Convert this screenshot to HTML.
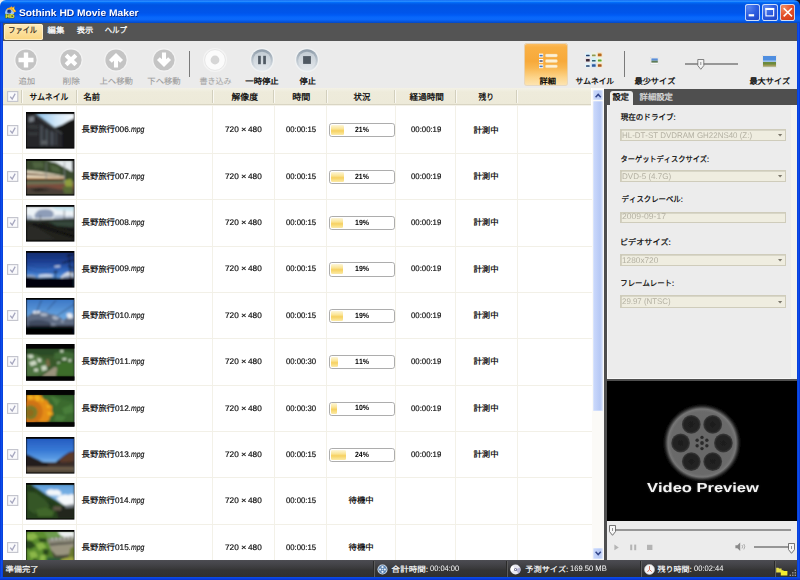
<!DOCTYPE html>
<html lang="ja"><head><meta charset="utf-8"><title>Sothink HD Movie Maker</title><style>
html,body{margin:0;padding:0;background:#fff}
body{width:800px;height:580px;position:relative;overflow:hidden;font-family:"Liberation Sans",sans-serif;font-kerning:none;text-rendering:geometricPrecision}
#root{position:absolute;left:0;top:0;width:800px;height:580px;overflow:hidden;background:#ebebeb}
#root div{position:absolute}
.j,.a{position:absolute;overflow:visible;display:block}
.j text{font-family:"Liberation Sans","Noto Sans CJK JP",sans-serif}
.s{-webkit-text-stroke:.17px currentColor}
.t{position:absolute;white-space:pre;line-height:1;transform-origin:0 50%;display:block}
#title{left:0;top:0;width:800px;height:23.4px;border-radius:6px 6px 0 0;
background:linear-gradient(to bottom,#0058ee 0%,#3593ff 4%,#288eff 6%,#127dff 8%,#036ffc 10%,#0262ee 14%,#0057e5 20%,#0054e3 24%,#0055eb 56%,#005bf5 66%,#0867fa 74%,#0a68fb 84%,#0559e4 92%,#0647c2 100%)}
.wb{width:15.4px;height:16.4px;border-radius:2.8px;box-shadow:inset 0 0 0 .9px #cfe0fb;background:radial-gradient(circle at 25% 20%,#5a86f0 0%,#2c5ce0 45%,#1c40c0 100%)}
.wc{background:radial-gradient(circle at 25% 20%,#f08a60 0%,#e4502a 45%,#c83412 100%)}
</style></head><body><div id="root">
<div style="left:792.00px;top:0.00px;width:8.00px;height:8.00px;background:#14142c"></div>
<div id="title"></div>
<svg class="a" style="left:4px;top:5.5px" width="13" height="13" viewBox="0 0 13 13">
<circle cx="5.6" cy="6.6" r="4.5" fill="#9cc6f0"/><circle cx="5.2" cy="5.4" r="2.1" fill="#2648a8"/><circle cx="4.9" cy="5.1" r="1" fill="#0e2a78"/>
<path d="M1.6 4.6 Q3 1.6 6.4 1.2 L7.6 0.2 L8.4 1.6 L10.6 0.3 L10.2 2.8 L12.2 5.4 L10 6.6 Q8.6 3.4 5.6 3.2 Q3.4 3.2 1.6 4.6 Z" fill="#f6a623"/>
<path d="M2.6 3.6 Q4.4 1.8 7 1.9 Q9.4 2.6 10.4 5.6 L11.6 5.3 L10 3.2 L10 1.6 L8.4 2.4 Q5 1.4 2.6 3.6 Z" fill="#ffe23c"/>
<rect x="0.9" y="7.9" width="9.6" height="4.6" rx=".8" fill="#4a5a18" opacity=".8"/>
<text x="1.2" y="12.1" font-family="Liberation Sans" font-weight="bold" font-size="5.4" fill="#f2f03a" textLength="9" lengthAdjust="spacingAndGlyphs">HD</text></svg>
<span class="t" style="left:19.30px;top:9.00px;font-size:9.60px;color:#fff;font-weight:bold;transform:scaleX(1.0681);text-shadow:0.7px 0.7px 0.5px #0a2a8a;">Sothink HD Movie Maker</span>
<div class="wb" style="left:744.8px;top:4.3px"><svg width="15.4" height="16.4" viewBox="0 -0.6 15.2 16.4" preserveAspectRatio="none"><rect x="3.6" y="9.6" width="5.4" height="2.2" fill="#fff"/></svg></div>
<div class="wb" style="left:762.2px;top:4.3px"><svg width="15.4" height="16.4" viewBox="0 -0.6 15.2 16.4" preserveAspectRatio="none"><rect x="3.9" y="3.9" width="7.6" height="7.4" fill="none" stroke="#fff" stroke-width="1.1"/><rect x="3.4" y="3.4" width="8.6" height="2" fill="#fff"/></svg></div>
<div class="wb wc" style="left:779.7px;top:4.3px"><svg width="15.4" height="16.4" viewBox="0 -0.6 15.2 16.4" preserveAspectRatio="none"><path d="M4.2 4.2 L11.2 11.2 M11.2 4.2 L4.2 11.2" stroke="#fff" stroke-width="1.6" stroke-linecap="square"/></svg></div>
<div style="left:3.00px;top:23.20px;width:794.00px;height:18.00px;background:#545454"></div>
<div style="left:3.60px;top:24.20px;width:39.40px;height:15.40px;background:linear-gradient(#fdebbd,#fbd57e);border-radius:2.5px;box-shadow:inset 0 0 0 0.8px #fff3d2"></div>
<svg class="j" style="left:6.60px;top:22.00px" width="31.40" height="16.60"><title>ファイル</title><text x="1.36" y="11.45" font-size="8.3" fill="#2a2418" stroke="#2a2418" stroke-width=".2" textLength="28.7" lengthAdjust="spacingAndGlyphs">ファイル</text></svg>
<svg class="j" style="left:46.10px;top:22.20px" width="20.00" height="16.00"><title>編集</title><text x="1.64" y="11.04" font-size="8" fill="#fff" stroke="#fff" stroke-width=".25" textLength="16.7" lengthAdjust="spacingAndGlyphs">編集</text></svg>
<svg class="j" style="left:74.60px;top:22.20px" width="19.80" height="16.00"><title>表示</title><text x="1.72" y="11.04" font-size="8" fill="#fff" stroke="#fff" stroke-width=".25" textLength="16.4" lengthAdjust="spacingAndGlyphs">表示</text></svg>
<svg class="j" style="left:103.40px;top:22.00px" width="25.60" height="16.60"><title>ヘルプ</title><text x="1.64" y="11.45" font-size="8.3" fill="#fff" stroke="#fff" stroke-width=".23" textLength="22.3" lengthAdjust="spacingAndGlyphs">ヘルプ</text></svg>
<div style="left:3.00px;top:41.20px;width:794.00px;height:47.00px;background:#ebebeb"></div>
<svg class="a" style="left:13.30px;top:47px" width="26" height="26" viewBox="-13 -13 26 26"><circle r="11.8" fill="#f3f3f3"/><circle r="10.6" fill="#c4c4c4"/><path d="M-7.5 0 H7.5 M0 -7.5 V7.5" stroke="#fff" stroke-width="4.4"/></svg>
<svg class="a" style="left:57.50px;top:47px" width="26" height="26" viewBox="-13 -13 26 26"><circle r="11.8" fill="#f3f3f3"/><circle r="10.6" fill="#c4c4c4"/><path d="M-4.9 -4.7 L4.9 4.7 M4.9 -4.7 L-4.9 4.7" stroke="#fff" stroke-width="4.1"/></svg>
<svg class="a" style="left:102.80px;top:47px" width="26" height="26" viewBox="-13 -13 26 26"><circle r="11.8" fill="#f3f3f3"/><circle r="10.6" fill="#c4c4c4"/><path d="M0 7.4 V-2 M-5.6 1.4 L0 -4.2 L5.6 1.4" stroke="#fff" stroke-width="4.1" fill="none" stroke-linejoin="miter"/></svg>
<svg class="a" style="left:150.80px;top:47px" width="26" height="26" viewBox="-13 -13 26 26"><circle r="11.8" fill="#f3f3f3"/><circle r="10.6" fill="#c4c4c4"/><path d="M0 -7.4 V2 M-5.6 -1.4 L0 4.2 L5.6 -1.4" stroke="#fff" stroke-width="4.1" fill="none" stroke-linejoin="miter"/></svg>
<svg class="j" style="left:16.80px;top:72.70px" width="19.70" height="16.00"><title>追加</title><text x="1.52" y="11.04" font-size="8" fill="#9c9c9c" stroke="#9c9c9c" stroke-width=".1" textLength="16.7" lengthAdjust="spacingAndGlyphs">追加</text></svg>
<svg class="j" style="left:60.50px;top:72.70px" width="20.30" height="16.00"><title>削除</title><text x="1.40" y="11.04" font-size="8" fill="#9c9c9c" stroke="#9c9c9c" stroke-width=".1" textLength="17.5" lengthAdjust="spacingAndGlyphs">削除</text></svg>
<svg class="j" style="left:98.00px;top:72.70px" width="36.50" height="16.00"><title>上へ移動</title><text x="1.48" y="11.04" font-size="8" fill="#9c9c9c" stroke="#9c9c9c" stroke-width=".1" textLength="33.5" lengthAdjust="spacingAndGlyphs">上へ移動</text></svg>
<svg class="j" style="left:145.50px;top:72.70px" width="36.00" height="16.00"><title>下へ移動</title><text x="1.33" y="11.04" font-size="8" fill="#9c9c9c" stroke="#9c9c9c" stroke-width=".1" textLength="33.3" lengthAdjust="spacingAndGlyphs">下へ移動</text></svg>
<div style="left:188.80px;top:51.00px;width:1.20px;height:26.00px;background:#7a7a7a"></div>
<svg class="a" style="left:202px;top:46.8px" width="26" height="26" viewBox="-13 -13 26 26"><circle r="12" fill="#f4f4f4"/><circle r="10.4" fill="#fbfbfb" stroke="#e2e2e2" stroke-width=".8"/><circle r="4.4" fill="#d6d6d6"/></svg>
<svg class="j" style="left:198.00px;top:72.70px" width="35.20" height="16.00"><title>書き込み</title><text x="1.58" y="11.04" font-size="8" fill="#a6a6a6" stroke="#a6a6a6" stroke-width=".08" textLength="32" lengthAdjust="spacingAndGlyphs">書き込み</text></svg>
<svg class="a" style="left:248.80px;top:46.8px" width="26" height="26" viewBox="-13 -13 26 26"><defs><linearGradient id="egpause" x1="0" y1="0" x2="0" y2="1"><stop offset="0" stop-color="#8d9ba8"/><stop offset=".5" stop-color="#b9c3cc"/><stop offset="1" stop-color="#e6ebef"/></linearGradient><linearGradient id="ehpause" x1="0" y1="0" x2="0" y2="1"><stop offset="0" stop-color="#c3ccd4"/><stop offset="1" stop-color="#e2e7eb"/></linearGradient></defs><circle r="12.2" fill="#f0f2f3"/><circle r="10.8" fill="url(#egpause)"/><circle cy=".5" r="8.8" fill="url(#ehpause)"/><rect x="-3.9" y="-4.2" width="2.7" height="8.4" fill="#4f5963"/><rect x="1.2" y="-4.2" width="2.7" height="8.4" fill="#4f5963"/></svg>
<svg class="a" style="left:294.00px;top:46.8px" width="26" height="26" viewBox="-13 -13 26 26"><defs><linearGradient id="egstop" x1="0" y1="0" x2="0" y2="1"><stop offset="0" stop-color="#8d9ba8"/><stop offset=".5" stop-color="#b9c3cc"/><stop offset="1" stop-color="#e6ebef"/></linearGradient><linearGradient id="ehstop" x1="0" y1="0" x2="0" y2="1"><stop offset="0" stop-color="#c3ccd4"/><stop offset="1" stop-color="#e2e7eb"/></linearGradient></defs><circle r="12.2" fill="#f0f2f3"/><circle r="10.8" fill="url(#egstop)"/><circle cy=".5" r="8.8" fill="url(#ehstop)"/><rect x="-3.9" y="-3.9" width="7.8" height="7.8" fill="#4f5963"/></svg>
<svg class="j" style="left:243.50px;top:72.70px" width="36.00" height="16.00"><title>一時停止</title><text x="1.33" y="11.04" font-size="8" fill="#000" stroke="#000" stroke-width=".28" textLength="33.3" lengthAdjust="spacingAndGlyphs">一時停止</text></svg>
<svg class="j" style="left:297.50px;top:72.70px" width="19.50" height="16.00"><title>停止</title><text x="1.63" y="11.04" font-size="8" fill="#000" stroke="#000" stroke-width=".28" textLength="16.2" lengthAdjust="spacingAndGlyphs">停止</text></svg>
<div style="left:524.40px;top:42.60px;width:44.10px;height:43.60px;background:linear-gradient(#fbc068 0%,#f9b044 10%,#f7a93a 42%,#f9b750 58%,#fcd48a 80%,#fde6b6 100%);border-radius:3.5px;box-shadow:inset 0 0 0 0.9px rgba(226,214,196,.9)"></div>
<svg class="a" style="left:538px;top:52.6px" width="20" height="18" viewBox="0 0 20 18">
<g fill="#fdf1d6" stroke="#f3d6a0" stroke-width=".4"><rect x="7.4" y="1.1" width="12" height="2.9" rx="1.2"/><rect x="7.4" y="6.5" width="12" height="2.9" rx="1.2"/><rect x="7.4" y="11.9" width="12" height="2.9" rx="1.2"/></g>
<g><rect x="1" y=".6" width="4.2" height="3.8" fill="#fff"/><rect x="1.5" y="1.8" width="3.2" height="1.6" fill="#4a78b8"/>
<rect x="1" y="6" width="4.2" height="3.8" fill="#fff"/><rect x="1.5" y="7.2" width="3.2" height="1.6" fill="#5a5a70"/>
<rect x="1" y="11.4" width="4.2" height="3.8" fill="#fff"/><rect x="1.5" y="12.6" width="3.2" height="1.6" fill="#4a78b8"/></g></svg>
<svg class="j" style="left:537.50px;top:73.00px" width="19.50" height="16.00"><title>詳細</title><text x="1.55" y="11.04" font-size="8" fill="#000" stroke="#000" stroke-width=".28" textLength="16.4" lengthAdjust="spacingAndGlyphs">詳細</text></svg>
<svg class="a" style="left:585.4px;top:52.1px" width="17.7" height="15.3" viewBox="0 0 17.7 15.3"><rect x="0.20" y="0.30" width="5.30" height="4.50" fill="#dff2fa"/><rect x="1.00" y="2.72" width="3.70" height="1.48" rx=".5" fill="#1f3d6e"/><rect x="6.15" y="0.30" width="5.30" height="4.50" fill="#eef2e4"/><rect x="6.95" y="2.39" width="3.70" height="1.81" rx=".5" fill="#8f9a50"/><rect x="12.10" y="0.30" width="5.30" height="4.50" fill="#f6e2c0"/><rect x="12.90" y="1.56" width="3.70" height="2.64" rx=".5" fill="#b8681c"/><rect x="0.20" y="5.60" width="5.30" height="4.50" fill="#e8e0e4"/><rect x="1.00" y="7.03" width="3.70" height="2.47" rx=".5" fill="#3a2a38"/><rect x="6.15" y="5.60" width="5.30" height="4.50" fill="#d4f2f6"/><rect x="6.95" y="8.02" width="3.70" height="1.48" rx=".5" fill="#2c5a6c"/><rect x="12.10" y="5.60" width="5.30" height="4.50" fill="#eef6dc"/><rect x="12.90" y="7.52" width="3.70" height="1.98" rx=".5" fill="#5fa32c"/><rect x="0.20" y="10.90" width="5.30" height="4.50" fill="#e2f3fa"/><rect x="1.00" y="13.32" width="3.70" height="1.48" rx=".5" fill="#23426e"/><rect x="6.15" y="10.90" width="5.30" height="4.50" fill="#cfe0f4"/><rect x="6.95" y="12.33" width="3.70" height="2.47" rx=".5" fill="#2c5a9c"/><rect x="12.10" y="10.90" width="5.30" height="4.50" fill="#fae6c4"/><rect x="12.90" y="12.16" width="3.70" height="2.64" rx=".5" fill="#a8561c"/></svg>
<svg class="j" style="left:574.20px;top:73.00px" width="41.60" height="16.00"><title>サムネイル</title><text x="1.49" y="11.04" font-size="8" fill="#000" stroke="#000" stroke-width=".25" textLength="38.6" lengthAdjust="spacingAndGlyphs">サムネイル</text></svg>
<div style="left:624.00px;top:51.00px;width:1.20px;height:26.00px;background:#7a7a7a"></div>
<svg class="a" style="left:650.2px;top:57.1px" width="9.2" height="7.8" viewBox="0 0 9 8"><rect x=".2" y=".2" width="8.6" height="7.2" fill="#f8f8f8" stroke="#d0d0d0" stroke-width=".4"/><rect x="1.2" y="1.4" width="6.6" height="2.4" fill="#5b8ed6"/><rect x="1.2" y="3.8" width="6.6" height="2" fill="#5c7a58"/></svg>
<svg class="j" style="left:633.00px;top:72.70px" width="44.00" height="16.00"><title>最少サイズ</title><text x="1.48" y="11.04" font-size="8" fill="#000" stroke="#000" stroke-width=".25" textLength="41" lengthAdjust="spacingAndGlyphs">最少サイズ</text></svg>
<div style="left:685.00px;top:63.40px;width:53.00px;height:1.50px;background:#979797"></div>
<svg class="a" style="left:697.2px;top:59.2px" width="7.6" height="11" viewBox="0 0 7 11"><path d="M.5 .5 H6.5 V6.6 L3.5 10.3 L.5 6.6 Z" fill="#f4f4f4" stroke="#666" stroke-width=".8"/><path d="M3.5 3 V6" stroke="#888" stroke-width=".9"/></svg>
<svg class="a" style="left:761.6px;top:54.6px" width="15" height="13" viewBox="0 0 15 13"><rect x=".2" y=".2" width="14.6" height="12.2" fill="#f4f4f4" stroke="#d4d4d4" stroke-width=".4"/><rect x="1" y="1" width="13" height="6" fill="#4f8ee0"/><rect x="1" y="5.4" width="13" height="1.6" fill="#9cc0e8"/><rect x="1" y="7" width="13" height="4.4" fill="#6b8a3c"/><rect x="1" y="9.6" width="13" height="1.8" fill="#a09a58"/></svg>
<svg class="j" style="left:747.80px;top:72.70px" width="43.70" height="16.00"><title>最大サイズ</title><text x="1.48" y="11.04" font-size="8" fill="#000" stroke="#000" stroke-width=".25" textLength="40.7" lengthAdjust="spacingAndGlyphs">最大サイズ</text></svg>
<div style="left:3.00px;top:88.00px;width:601.00px;height:472.00px;background:#fff"></div>
<div style="left:3.00px;top:88.20px;width:588.30px;height:15.50px;background:linear-gradient(#f3f1e6 0%,#eeebdb 25%,#edead9 100%);border-bottom:1.2px solid #d9d5c3;box-shadow:0 1px 0.6px #f4f2ea"></div>
<div style="left:21.10px;top:90.40px;width:1.00px;height:12.40px;background:#d2cfbd;box-shadow:1px 0 0 #faf9f3"></div>
<div style="left:21.70px;top:105.40px;width:1.00px;height:454.60px;background:#f3f1e8"></div>
<div style="left:75.70px;top:90.40px;width:1.00px;height:12.40px;background:#d2cfbd;box-shadow:1px 0 0 #faf9f3"></div>
<div style="left:76.30px;top:105.40px;width:1.00px;height:454.60px;background:#f3f1e8"></div>
<div style="left:211.70px;top:90.40px;width:1.00px;height:12.40px;background:#d2cfbd;box-shadow:1px 0 0 #faf9f3"></div>
<div style="left:212.30px;top:105.40px;width:1.00px;height:454.60px;background:#f3f1e8"></div>
<div style="left:273.30px;top:90.40px;width:1.00px;height:12.40px;background:#d2cfbd;box-shadow:1px 0 0 #faf9f3"></div>
<div style="left:273.90px;top:105.40px;width:1.00px;height:454.60px;background:#f3f1e8"></div>
<div style="left:325.70px;top:90.40px;width:1.00px;height:12.40px;background:#d2cfbd;box-shadow:1px 0 0 #faf9f3"></div>
<div style="left:326.30px;top:105.40px;width:1.00px;height:454.60px;background:#f3f1e8"></div>
<div style="left:394.20px;top:90.40px;width:1.00px;height:12.40px;background:#d2cfbd;box-shadow:1px 0 0 #faf9f3"></div>
<div style="left:394.80px;top:105.40px;width:1.00px;height:454.60px;background:#f3f1e8"></div>
<div style="left:454.50px;top:90.40px;width:1.00px;height:12.40px;background:#d2cfbd;box-shadow:1px 0 0 #faf9f3"></div>
<div style="left:455.10px;top:105.40px;width:1.00px;height:454.60px;background:#f3f1e8"></div>
<div style="left:515.90px;top:90.40px;width:1.00px;height:12.40px;background:#d2cfbd;box-shadow:1px 0 0 #faf9f3"></div>
<div style="left:516.50px;top:105.40px;width:1.00px;height:454.60px;background:#f3f1e8"></div>
<svg class="a" style="left:6.60px;top:91.20px;opacity:1" width="11.4" height="11" viewBox="0 0 11.4 11"><rect x=".6" y=".6" width="10.2" height="9.8" fill="#fafafc" stroke="#c2c3cc" stroke-width="1.1"/><path d="M3.2 5.6 L5.2 8 L8.2 2.6" fill="none" stroke="#a6a7bf" stroke-width="1.3"/></svg>
<svg class="j" style="left:28.20px;top:87.80px" width="41.80" height="17.20"><title>サムネイル</title><text x="1.48" y="11.87" font-size="8.6" fill="#000" stroke="#000" stroke-width=".25" textLength="38.8" lengthAdjust="spacingAndGlyphs">サムネイル</text></svg>
<svg class="j" style="left:82.00px;top:87.80px" width="19.50" height="17.20"><title>名前</title><text x="1.49" y="11.87" font-size="8.6" fill="#000" stroke="#000" stroke-width=".25" textLength="16.5" lengthAdjust="spacingAndGlyphs">名前</text></svg>
<svg class="j" style="left:230.00px;top:87.80px" width="29.50" height="17.20"><title>解像度</title><text x="1.61" y="11.87" font-size="8.6" fill="#000" stroke="#000" stroke-width=".25" textLength="26.3" lengthAdjust="spacingAndGlyphs">解像度</text></svg>
<svg class="j" style="left:290.80px;top:87.80px" width="20.70" height="17.20"><title>時間</title><text x="1.26" y="11.87" font-size="8.6" fill="#000" stroke="#000" stroke-width=".25" textLength="18.2" lengthAdjust="spacingAndGlyphs">時間</text></svg>
<svg class="j" style="left:352.00px;top:87.80px" width="20.00" height="17.20"><title>状況</title><text x="1.59" y="11.87" font-size="8.6" fill="#000" stroke="#000" stroke-width=".25" textLength="16.8" lengthAdjust="spacingAndGlyphs">状況</text></svg>
<svg class="j" style="left:408.00px;top:87.80px" width="37.40" height="17.20"><title>経過時間</title><text x="1.57" y="11.87" font-size="8.6" fill="#000" stroke="#000" stroke-width=".25" textLength="34.3" lengthAdjust="spacingAndGlyphs">経過時間</text></svg>
<svg class="j" style="left:477.00px;top:87.80px" width="18.50" height="17.20"><title>残り</title><text x="1.53" y="11.87" font-size="8.6" fill="#000" stroke="#000" stroke-width=".25" textLength="15.4" lengthAdjust="spacingAndGlyphs">残り</text></svg>
<div style="left:3.00px;top:152.90px;width:588.60px;height:1.00px;background:#f2f0e7"></div>
<svg class="a" style="left:6.60px;top:124.50px;opacity:1" width="11.4" height="11" viewBox="0 0 11.4 11"><rect x=".6" y=".6" width="10.2" height="9.8" fill="#fafafc" stroke="#c2c3cc" stroke-width="1.1"/><path d="M3.2 5.6 L5.2 8 L8.2 2.6" fill="none" stroke="#a6a7bf" stroke-width="1.3"/></svg>
<svg class="a" style="left:25.90px;top:112.20px" width="48.4" height="36.6" viewBox="0 0 48 36" preserveAspectRatio="none"><defs><filter id="tb0" x="-5%" y="-5%" width="110%" height="110%"><feGaussianBlur stdDeviation=".8"/></filter><clipPath id="tc0"><rect x=".3" y="1.8" width="47.4" height="33.1"/></clipPath></defs><rect width="48" height="36" fill="#040404"/><g clip-path="url(#tc0)"><g filter="url(#tb0)"><rect width="48" height="36" fill="#1b1c1d"/><linearGradient id="s0" x1="0" x2="1" y1="0" y2="0"><stop offset="0" stop-color="#8fc4ee"/><stop offset=".55" stop-color="#d4e8f8"/><stop offset="1" stop-color="#f6fafd"/></linearGradient><path d="M9.5 1.5 L48 1.5 L48 6.5 L42 9 L36 12.5 L28.5 15.2 Z" fill="url(#s0)"/><path d="M0 3 L9.5 1.5 L28.5 15.2 L36 21 L36 35 L0 35 Z" fill="#25272a"/><path d="M3 5 L8 4 L8 9 L3 10 Z" fill="#7a8088"/><path d="M2 12 L12 13 L12 17 L2 16 Z M2 20 L12 20 L12 23 L2 23 Z" fill="#34373a"/><path d="M14 12 L17 14 L17 33 L14 33 Z M19 16 L22 17.5 L22 33 L19 33 Z M24 18 L27.5 20 L27.5 33 L24 33 Z" fill="#474d55"/><path d="M29 19 L31 20 L31 33 L29 33 Z" fill="#3d4248"/><path d="M8.5 2.5 L36 21.5" stroke="#555a5e" stroke-width="1.1"/><path d="M15 28 L21 28 L21 32 L15 32 Z" fill="#5a5e62"/><path d="M29 15.8 L36 12.5 L42 9 L48 6.5 L48 35 L37 35 L36 21 Z" fill="#161817"/></g></g></svg>
<svg class="j" style="left:79.90px;top:121.45px" width="36.50" height="16.50"><title>長野旅行</title><text x="1.54" y="11.39" font-size="8.25" fill="#000" stroke="#000" stroke-width=".2" textLength="33.4" lengthAdjust="spacingAndGlyphs">長野旅行</text></svg>
<span class="t s" style="left:114.58px;top:126.00px;font-size:8.20px;color:#0a0a0a;transform:scaleX(1.0076);">006</span>
<span class="t s" style="left:128.57px;top:126.00px;font-size:8.20px;color:#0a0a0a;transform:scaleX(0.8435);font-style:italic;">.mpg</span>
<span class="t s" style="left:225.48px;top:126.00px;font-size:8.00px;color:#0a0a0a;transform:scaleX(1.0297);">720</span>
<span class="t s" style="left:241.25px;top:126.00px;font-size:8.00px;color:#0a0a0a;transform:scaleX(1.1777);">×</span>
<span class="t s" style="left:247.81px;top:126.00px;font-size:8.00px;color:#0a0a0a;transform:scaleX(1.0271);">480</span>
<span class="t s" style="left:285.60px;top:126.00px;font-size:8.00px;color:#0a0a0a;transform:scaleX(0.9675);">00:00:15</span>
<div style="left:329.10px;top:123.30px;width:65.60px;height:14.10px;background:#fff;border:1.2px solid #adadad;border-radius:2.8px;box-sizing:border-box"><div style="left:0.9px;top:0.9px;width:12.89px;height:10.1px;background:linear-gradient(#fdf6d8 0%,#fbe596 38%,#f6d061 58%,#f8d974 70%,#fbeaa8 100%);border-radius:1.2px"></div></div>
<span class="t" style="left:354.96px;top:126.00px;font-size:7.60px;color:#000;font-weight:bold;transform:scaleX(0.9086);">21%</span>
<span class="t s" style="left:410.80px;top:126.00px;font-size:8.00px;color:#0a0a0a;transform:scaleX(0.9721);">00:00:19</span>
<svg class="j" style="left:472.20px;top:121.50px" width="28.10" height="16.20"><title>計測中</title><text x="1.49" y="11.18" font-size="8.1" fill="#000" stroke="#000" stroke-width=".2" textLength="25.1" lengthAdjust="spacingAndGlyphs">計測中</text></svg>
<div style="left:3.00px;top:199.27px;width:588.60px;height:1.00px;background:#f2f0e7"></div>
<svg class="a" style="left:6.60px;top:170.87px;opacity:1" width="11.4" height="11" viewBox="0 0 11.4 11"><rect x=".6" y=".6" width="10.2" height="9.8" fill="#fafafc" stroke="#c2c3cc" stroke-width="1.1"/><path d="M3.2 5.6 L5.2 8 L8.2 2.6" fill="none" stroke="#a6a7bf" stroke-width="1.3"/></svg>
<svg class="a" style="left:25.90px;top:158.57px" width="48.4" height="36.6" viewBox="0 0 48 36" preserveAspectRatio="none"><defs><filter id="tb1" x="-5%" y="-5%" width="110%" height="110%"><feGaussianBlur stdDeviation=".8"/></filter><clipPath id="tc1"><rect x=".3" y="1.8" width="47.4" height="33.1"/></clipPath></defs><rect width="48" height="36" fill="#040404"/><g clip-path="url(#tc1)"><g filter="url(#tb1)"><rect width="48" height="36" fill="#39482c"/><path d="M20 1.5 L46 1.5 L46 13 L41 10 L36 7.5 L30 4 Z" fill="#e6ecee"/><path d="M0 2 L20 2 L30 4 L36 7.5 L41 10 L48 14 L48 20 L0 13 Z" fill="#3a4c2e"/><path d="M6 3 L16 3 L18 8 L8 9 Z M24 6 L32 8 L34 13 L26 12 Z" fill="#4f6440"/><rect x="45.6" y="1.5" width="2.4" height="9.5" fill="#0a0a0a"/><path d="M0 11.3 L12 12.4 L26 14.6 L38 17 L38 19.4 L26 19.6 L0 20 Z" fill="#ebe1c8"/><path d="M0 13.6 L12 14.4 L26 16 L38 17.7 L38 18.3 L26 17.2 L12 16.2 L0 15.8 Z" fill="#6f5038"/><path d="M0 18.4 L26 18.8 L38 19 L38 19.6 L0 19.6 Z" fill="#c88a4a"/><path d="M0 20 L30 19.6 L40 19.6 L40 21 L0 22 Z" fill="#2a2620"/><rect x="0" y="21.6" width="48" height="4" fill="#6d7052"/><path d="M0 25.4 L48 24.2 L48 30 L0 31 Z" fill="#7c4e3e"/><path d="M0 28 L20 27.4 L34 30 L48 30 L48 35 L0 35 Z" fill="#4b4038"/><path d="M4 30 L14 29 L24 31 L10 32 Z" fill="#27231f"/><path d="M37 21 L45 19.5 L46.5 27 L40 28.5 Z" fill="#8f9e3c"/><path d="M36 27 L46 27 L46 34 L38 34 Z" fill="#596a36"/><path d="M20 3 V20 M38.2 3 V24" stroke="#7d8286" stroke-width=".8"/></g></g></svg>
<svg class="j" style="left:79.90px;top:167.82px" width="36.50" height="16.50"><title>長野旅行</title><text x="1.54" y="11.39" font-size="8.25" fill="#000" stroke="#000" stroke-width=".2" textLength="33.4" lengthAdjust="spacingAndGlyphs">長野旅行</text></svg>
<span class="t s" style="left:114.58px;top:173.00px;font-size:8.20px;color:#0a0a0a;transform:scaleX(1.0117);">007</span>
<span class="t s" style="left:128.57px;top:173.00px;font-size:8.20px;color:#0a0a0a;transform:scaleX(0.8435);font-style:italic;">.mpg</span>
<span class="t s" style="left:225.48px;top:173.00px;font-size:8.00px;color:#0a0a0a;transform:scaleX(1.0297);">720</span>
<span class="t s" style="left:241.25px;top:173.00px;font-size:8.00px;color:#0a0a0a;transform:scaleX(1.1777);">×</span>
<span class="t s" style="left:247.81px;top:173.00px;font-size:8.00px;color:#0a0a0a;transform:scaleX(1.0271);">480</span>
<span class="t s" style="left:285.60px;top:173.00px;font-size:8.00px;color:#0a0a0a;transform:scaleX(0.9675);">00:00:15</span>
<div style="left:329.10px;top:169.67px;width:65.60px;height:14.10px;background:#fff;border:1.2px solid #adadad;border-radius:2.8px;box-sizing:border-box"><div style="left:0.9px;top:0.9px;width:12.89px;height:10.1px;background:linear-gradient(#fdf6d8 0%,#fbe596 38%,#f6d061 58%,#f8d974 70%,#fbeaa8 100%);border-radius:1.2px"></div></div>
<span class="t" style="left:354.96px;top:173.00px;font-size:7.60px;color:#000;font-weight:bold;transform:scaleX(0.9086);">21%</span>
<span class="t s" style="left:410.80px;top:173.00px;font-size:8.00px;color:#0a0a0a;transform:scaleX(0.9721);">00:00:19</span>
<svg class="j" style="left:472.20px;top:167.87px" width="28.10" height="16.20"><title>計測中</title><text x="1.49" y="11.18" font-size="8.1" fill="#000" stroke="#000" stroke-width=".2" textLength="25.1" lengthAdjust="spacingAndGlyphs">計測中</text></svg>
<div style="left:3.00px;top:245.64px;width:588.60px;height:1.00px;background:#f2f0e7"></div>
<svg class="a" style="left:6.60px;top:217.24px;opacity:1" width="11.4" height="11" viewBox="0 0 11.4 11"><rect x=".6" y=".6" width="10.2" height="9.8" fill="#fafafc" stroke="#c2c3cc" stroke-width="1.1"/><path d="M3.2 5.6 L5.2 8 L8.2 2.6" fill="none" stroke="#a6a7bf" stroke-width="1.3"/></svg>
<svg class="a" style="left:25.90px;top:204.94px" width="48.4" height="36.6" viewBox="0 0 48 36" preserveAspectRatio="none"><defs><filter id="tb2" x="-5%" y="-5%" width="110%" height="110%"><feGaussianBlur stdDeviation=".8"/></filter><clipPath id="tc2"><rect x=".3" y="1.8" width="47.4" height="33.1"/></clipPath></defs><rect width="48" height="36" fill="#040404"/><g clip-path="url(#tc2)"><g filter="url(#tb2)"><rect width="48" height="36" fill="#1d1e1b"/><rect x="0" y="1.5" width="48" height="13" fill="#edf3f7"/><path d="M24 1.5 L48 1.5 L48 6 L30 5 Z" fill="#c9e6f1"/><path d="M11 6.5 Q13 4 19 4.2 Q25 3.8 27 7 Q28.5 10 26 12.6 L9 13 Q7 10 11 6.5 Z" fill="#8e9db8"/><path d="M0 10 Q4 9 7 11.6 L6 14 L0 14 Z M28 10.4 Q34 9 40 11 Q44 10 48 11.6 L48 14 L27 14 Z" fill="#b6c1d2"/><path d="M0 14 L12 14.6 L24 14 L36 13.6 L48 13 L48 17.5 L0 17.5 Z" fill="#283029"/><path d="M22 16.5 L48 16 L48 22 L30 20.6 Z" fill="#34463a"/><path d="M0 17 L20 17 L48 27 L48 35 L0 35 Z" fill="#20211e"/><path d="M8 18.5 L48 29.5 L48 32.5 L6 19.5 Z" fill="#0c0c0a"/><path d="M14 18 L48 24.5 L48 26 L13 18.8 Z" fill="#10100d"/><path d="M2 20 L10 22 L30 34 L0 35 Z" fill="#2b2c27"/><path d="M14.2 10 V18 M38 5 V14" stroke="#3b3f45" stroke-width=".6"/></g></g></svg>
<svg class="j" style="left:79.90px;top:214.19px" width="36.50" height="16.50"><title>長野旅行</title><text x="1.54" y="11.39" font-size="8.25" fill="#000" stroke="#000" stroke-width=".2" textLength="33.4" lengthAdjust="spacingAndGlyphs">長野旅行</text></svg>
<span class="t s" style="left:114.58px;top:219.00px;font-size:8.20px;color:#0a0a0a;transform:scaleX(1.0073);">008</span>
<span class="t s" style="left:128.57px;top:219.00px;font-size:8.20px;color:#0a0a0a;transform:scaleX(0.8435);font-style:italic;">.mpg</span>
<span class="t s" style="left:225.48px;top:219.00px;font-size:8.00px;color:#0a0a0a;transform:scaleX(1.0297);">720</span>
<span class="t s" style="left:241.25px;top:219.00px;font-size:8.00px;color:#0a0a0a;transform:scaleX(1.1777);">×</span>
<span class="t s" style="left:247.81px;top:219.00px;font-size:8.00px;color:#0a0a0a;transform:scaleX(1.0271);">480</span>
<span class="t s" style="left:285.60px;top:219.00px;font-size:8.00px;color:#0a0a0a;transform:scaleX(0.9675);">00:00:15</span>
<div style="left:329.10px;top:216.04px;width:65.60px;height:14.10px;background:#fff;border:1.2px solid #adadad;border-radius:2.8px;box-sizing:border-box"><div style="left:0.9px;top:0.9px;width:11.67px;height:10.1px;background:linear-gradient(#fdf6d8 0%,#fbe596 38%,#f6d061 58%,#f8d974 70%,#fbeaa8 100%);border-radius:1.2px"></div></div>
<span class="t" style="left:354.76px;top:219.00px;font-size:7.60px;color:#000;font-weight:bold;transform:scaleX(0.9221);">19%</span>
<span class="t s" style="left:410.80px;top:219.00px;font-size:8.00px;color:#0a0a0a;transform:scaleX(0.9721);">00:00:19</span>
<svg class="j" style="left:472.20px;top:214.24px" width="28.10" height="16.20"><title>計測中</title><text x="1.49" y="11.18" font-size="8.1" fill="#000" stroke="#000" stroke-width=".2" textLength="25.1" lengthAdjust="spacingAndGlyphs">計測中</text></svg>
<div style="left:3.00px;top:292.01px;width:588.60px;height:1.00px;background:#f2f0e7"></div>
<svg class="a" style="left:6.60px;top:263.61px;opacity:1" width="11.4" height="11" viewBox="0 0 11.4 11"><rect x=".6" y=".6" width="10.2" height="9.8" fill="#fafafc" stroke="#c2c3cc" stroke-width="1.1"/><path d="M3.2 5.6 L5.2 8 L8.2 2.6" fill="none" stroke="#a6a7bf" stroke-width="1.3"/></svg>
<svg class="a" style="left:25.90px;top:251.31px" width="48.4" height="36.6" viewBox="0 0 48 36" preserveAspectRatio="none"><defs><filter id="tb3" x="-5%" y="-5%" width="110%" height="110%"><feGaussianBlur stdDeviation=".8"/></filter><clipPath id="tc3"><rect x=".3" y="1.8" width="47.4" height="33.1"/></clipPath></defs><rect width="48" height="36" fill="#040404"/><g clip-path="url(#tc3)"><g filter="url(#tb3)"><linearGradient id="s3" x1="0" x2="0" y1="0" y2="1"><stop offset="0" stop-color="#12296a"/><stop offset=".3" stop-color="#1d3f92"/><stop offset=".55" stop-color="#346bc2"/><stop offset=".75" stop-color="#5b99da"/><stop offset="1" stop-color="#6aa8e0"/></linearGradient><rect width="48" height="36" fill="url(#s3)"/><path d="M28 14.8 Q31 13.8 34.4 14.4 L33.6 15.8 L28.4 16 Z" fill="#cfdcf0"/><path d="M13 23.4 Q20 22 27 23.4 L26 25.6 L12 26 Z" fill="#c3d2e8"/><path d="M35 25 Q39 20.6 44 20.4 L47 21.4 L47 27 L34 27 Z" fill="#d5dde8"/><path d="M37 25 L44 23.6 L46 27 L36 27 Z" fill="#8c9cbc"/><path d="M0 24 Q6 22.6 10 25 L10 28 L0 28 Z" fill="#8ea4c6"/><path d="M0 25.6 L12 26.6 L24 26.2 L36 26.8 L48 26 L48 38 L0 38 Z" fill="#060608"/><path d="M42.6 3 L44.6 28 M40 5 L47.4 3.4 M36 12 L47.6 8.6 M41.6 15 L47.6 17 M43 21 L47.6 20" stroke="#0e1220" stroke-width="1" fill="none"/><path d="M29.3 19 V28 M27 21 L32 20.4" stroke="#0e1220" stroke-width=".8"/><path d="M0 13 Q20 22 42 8 M0 17 Q14 24 29 20" stroke="#1a3274" stroke-width=".4" fill="none"/></g></g></svg>
<svg class="j" style="left:79.90px;top:260.56px" width="36.50" height="16.50"><title>長野旅行</title><text x="1.54" y="11.39" font-size="8.25" fill="#000" stroke="#000" stroke-width=".2" textLength="33.4" lengthAdjust="spacingAndGlyphs">長野旅行</text></svg>
<span class="t s" style="left:114.58px;top:265.00px;font-size:8.20px;color:#0a0a0a;transform:scaleX(1.0098);">009</span>
<span class="t s" style="left:128.57px;top:265.00px;font-size:8.20px;color:#0a0a0a;transform:scaleX(0.8435);font-style:italic;">.mpg</span>
<span class="t s" style="left:225.48px;top:265.00px;font-size:8.00px;color:#0a0a0a;transform:scaleX(1.0297);">720</span>
<span class="t s" style="left:241.25px;top:265.00px;font-size:8.00px;color:#0a0a0a;transform:scaleX(1.1777);">×</span>
<span class="t s" style="left:247.81px;top:265.00px;font-size:8.00px;color:#0a0a0a;transform:scaleX(1.0271);">480</span>
<span class="t s" style="left:285.60px;top:265.00px;font-size:8.00px;color:#0a0a0a;transform:scaleX(0.9675);">00:00:15</span>
<div style="left:329.10px;top:262.41px;width:65.60px;height:14.10px;background:#fff;border:1.2px solid #adadad;border-radius:2.8px;box-sizing:border-box"><div style="left:0.9px;top:0.9px;width:11.67px;height:10.1px;background:linear-gradient(#fdf6d8 0%,#fbe596 38%,#f6d061 58%,#f8d974 70%,#fbeaa8 100%);border-radius:1.2px"></div></div>
<span class="t" style="left:354.76px;top:265.00px;font-size:7.60px;color:#000;font-weight:bold;transform:scaleX(0.9221);">19%</span>
<span class="t s" style="left:410.80px;top:265.00px;font-size:8.00px;color:#0a0a0a;transform:scaleX(0.9721);">00:00:19</span>
<svg class="j" style="left:472.20px;top:260.61px" width="28.10" height="16.20"><title>計測中</title><text x="1.49" y="11.18" font-size="8.1" fill="#000" stroke="#000" stroke-width=".2" textLength="25.1" lengthAdjust="spacingAndGlyphs">計測中</text></svg>
<div style="left:3.00px;top:338.38px;width:588.60px;height:1.00px;background:#f2f0e7"></div>
<svg class="a" style="left:6.60px;top:309.98px;opacity:1" width="11.4" height="11" viewBox="0 0 11.4 11"><rect x=".6" y=".6" width="10.2" height="9.8" fill="#fafafc" stroke="#c2c3cc" stroke-width="1.1"/><path d="M3.2 5.6 L5.2 8 L8.2 2.6" fill="none" stroke="#a6a7bf" stroke-width="1.3"/></svg>
<svg class="a" style="left:25.90px;top:297.68px" width="48.4" height="36.6" viewBox="0 0 48 36" preserveAspectRatio="none"><defs><filter id="tb4" x="-5%" y="-5%" width="110%" height="110%"><feGaussianBlur stdDeviation=".8"/></filter><clipPath id="tc4"><rect x=".3" y="1.8" width="47.4" height="33.1"/></clipPath></defs><rect width="48" height="36" fill="#040404"/><g clip-path="url(#tc4)"><g filter="url(#tb4)"><linearGradient id="s4" x1="0" x2="0" y1="0" y2="1"><stop offset="0" stop-color="#3873c4"/><stop offset=".5" stop-color="#66a3de"/><stop offset="1" stop-color="#7db4e6"/></linearGradient><rect width="48" height="36" fill="url(#s4)"/><path d="M0 19 Q3 17 6 15 Q9 12.4 14 13.6 Q20 12.8 24 16 Q28 15.4 31 18 Q35 18.8 37 22 Q41 19 44 18 L48 19 L48 31 L0 31 Z" fill="#5d6a82"/><path d="M6.5 13.6 Q10 11.8 14.5 13.4 L13 15 L7.5 15.4 Z" fill="#e8eef6"/><path d="M40 16 Q43 13.6 46 16 L46.6 20 L42 20.4 Z" fill="#e9eef4"/><path d="M22 26 Q26 24 30 26 L29 28 L23 28.4 Z M34 22 Q36 21 38 23 L36 25 Z" fill="#8c98ae"/><path d="M2 23 Q12 19.6 22 23 Q28 26 22 28.6 L4 29 Z" fill="#414b60"/><path d="M14 15 Q18 14 22 16 L20 18 L15 17.6 Z M26 18 Q30 17 33 20 L30 21.6 L26.6 20.6 Z" fill="#aab6c8"/><path d="M0 27.4 L48 27 L48 35 L0 35 Z" fill="#14161c"/><rect x="0" y="29.4" width="48" height="9" fill="#030304"/><path d="M15.4 2 L10 14.5 M30 2 L21 12 M48 6 L30 18" stroke="#223050" stroke-width=".6" fill="none"/></g></g></svg>
<svg class="j" style="left:79.90px;top:306.93px" width="36.50" height="16.50"><title>長野旅行</title><text x="1.54" y="11.39" font-size="8.25" fill="#000" stroke="#000" stroke-width=".2" textLength="33.4" lengthAdjust="spacingAndGlyphs">長野旅行</text></svg>
<span class="t s" style="left:114.58px;top:312.00px;font-size:8.20px;color:#0a0a0a;transform:scaleX(1.0045);">010</span>
<span class="t s" style="left:128.57px;top:312.00px;font-size:8.20px;color:#0a0a0a;transform:scaleX(0.8435);font-style:italic;">.mpg</span>
<span class="t s" style="left:225.48px;top:312.00px;font-size:8.00px;color:#0a0a0a;transform:scaleX(1.0297);">720</span>
<span class="t s" style="left:241.25px;top:312.00px;font-size:8.00px;color:#0a0a0a;transform:scaleX(1.1777);">×</span>
<span class="t s" style="left:247.81px;top:312.00px;font-size:8.00px;color:#0a0a0a;transform:scaleX(1.0271);">480</span>
<span class="t s" style="left:285.60px;top:312.00px;font-size:8.00px;color:#0a0a0a;transform:scaleX(0.9675);">00:00:15</span>
<div style="left:329.10px;top:308.78px;width:65.60px;height:14.10px;background:#fff;border:1.2px solid #adadad;border-radius:2.8px;box-sizing:border-box"><div style="left:0.9px;top:0.9px;width:11.67px;height:10.1px;background:linear-gradient(#fdf6d8 0%,#fbe596 38%,#f6d061 58%,#f8d974 70%,#fbeaa8 100%);border-radius:1.2px"></div></div>
<span class="t" style="left:354.76px;top:312.00px;font-size:7.60px;color:#000;font-weight:bold;transform:scaleX(0.9221);">19%</span>
<span class="t s" style="left:410.80px;top:312.00px;font-size:8.00px;color:#0a0a0a;transform:scaleX(0.9721);">00:00:19</span>
<svg class="j" style="left:472.20px;top:306.98px" width="28.10" height="16.20"><title>計測中</title><text x="1.49" y="11.18" font-size="8.1" fill="#000" stroke="#000" stroke-width=".2" textLength="25.1" lengthAdjust="spacingAndGlyphs">計測中</text></svg>
<div style="left:3.00px;top:384.75px;width:588.60px;height:1.00px;background:#f2f0e7"></div>
<svg class="a" style="left:6.60px;top:356.35px;opacity:1" width="11.4" height="11" viewBox="0 0 11.4 11"><rect x=".6" y=".6" width="10.2" height="9.8" fill="#fafafc" stroke="#c2c3cc" stroke-width="1.1"/><path d="M3.2 5.6 L5.2 8 L8.2 2.6" fill="none" stroke="#a6a7bf" stroke-width="1.3"/></svg>
<svg class="a" style="left:25.90px;top:344.05px" width="48.4" height="36.6" viewBox="0 0 48 36" preserveAspectRatio="none"><defs><filter id="tb5" x="-5%" y="-5%" width="110%" height="110%"><feGaussianBlur stdDeviation=".8"/></filter><clipPath id="tc5"><rect x=".3" y="1.8" width="47.4" height="33.1"/></clipPath></defs><rect width="48" height="36" fill="#040404"/><g clip-path="url(#tc5)"><g filter="url(#tb5)"><rect width="48" height="36" fill="#050505"/><rect x="0" y="4.4" width="48" height="27.6" fill="#37592b"/><rect x="0" y="4.4" width="48" height="7" fill="#2c4b25"/><path d="M0 10 Q6 8.6 12 11 Q18 14 20 19 Q22 24 18 28 L12 32 L0 32 Z" fill="#4e7340"/><path d="M1 11 L6 10.4 L8 13 L4 14.6 Z M3 18 L9 16 L11 20 L5 22 Z M11 14 L15 14.6 L15 18 L12 17.6 Z M15 22 L20 21 L21 25.4 L16 26.6 Z M8 24 L12 24 L12 27 L8 27 Z" fill="#cdd9c4"/><path d="M28 9 Q36 6 48 9 L48 15 L28 15 Z" fill="#3f6a34"/><path d="M34 6 L37 6 L37 8.4 L34 8.4 Z M36 14 L40 13.6 L40 16 L36 16 Z M42 15 L45 15 L45 17.4 L42 17.4 Z M31 18 L34 17.6 L34 20 L31 20 Z" fill="#c9d8c0"/><path d="M20 15 L23 15 L24 22 L20 22 Z" fill="#7a6a44"/><path d="M28 22.6 L31 23 L30 32 L15 32 Q22 27 28 22.6 Z" fill="#9a937b"/><path d="M30 20 Q38 16 48 19 L48 32 L30 32 L31 24 Z" fill="#3d6d2b"/></g></g><rect width="48" height="4.5" fill="#040404"/><rect y="31.9" width="48" height="4.1" fill="#040404"/></svg>
<svg class="j" style="left:79.90px;top:353.30px" width="36.50" height="16.50"><title>長野旅行</title><text x="1.54" y="11.39" font-size="8.25" fill="#000" stroke="#000" stroke-width=".2" textLength="33.4" lengthAdjust="spacingAndGlyphs">長野旅行</text></svg>
<span class="t s" style="left:114.58px;top:358.00px;font-size:8.20px;color:#0a0a0a;transform:scaleX(1.0108);">011</span>
<span class="t s" style="left:128.57px;top:358.00px;font-size:8.20px;color:#0a0a0a;transform:scaleX(0.8435);font-style:italic;">.mpg</span>
<span class="t s" style="left:225.48px;top:358.00px;font-size:8.00px;color:#0a0a0a;transform:scaleX(1.0297);">720</span>
<span class="t s" style="left:241.25px;top:358.00px;font-size:8.00px;color:#0a0a0a;transform:scaleX(1.1777);">×</span>
<span class="t s" style="left:247.81px;top:358.00px;font-size:8.00px;color:#0a0a0a;transform:scaleX(1.0271);">480</span>
<span class="t s" style="left:285.60px;top:358.00px;font-size:8.00px;color:#0a0a0a;transform:scaleX(0.9667);">00:00:30</span>
<div style="left:329.10px;top:355.15px;width:65.60px;height:14.10px;background:#fff;border:1.2px solid #adadad;border-radius:2.8px;box-sizing:border-box"><div style="left:0.9px;top:0.9px;width:6.75px;height:10.1px;background:linear-gradient(#fdf6d8 0%,#fbe596 38%,#f6d061 58%,#f8d974 70%,#fbeaa8 100%);border-radius:1.2px"></div></div>
<span class="t" style="left:354.76px;top:358.00px;font-size:7.60px;color:#000;font-weight:bold;transform:scaleX(0.9221);">11%</span>
<span class="t s" style="left:410.80px;top:358.00px;font-size:8.00px;color:#0a0a0a;transform:scaleX(0.9721);">00:00:19</span>
<svg class="j" style="left:472.20px;top:353.35px" width="28.10" height="16.20"><title>計測中</title><text x="1.49" y="11.18" font-size="8.1" fill="#000" stroke="#000" stroke-width=".2" textLength="25.1" lengthAdjust="spacingAndGlyphs">計測中</text></svg>
<div style="left:3.00px;top:431.12px;width:588.60px;height:1.00px;background:#f2f0e7"></div>
<svg class="a" style="left:6.60px;top:402.72px;opacity:1" width="11.4" height="11" viewBox="0 0 11.4 11"><rect x=".6" y=".6" width="10.2" height="9.8" fill="#fafafc" stroke="#c2c3cc" stroke-width="1.1"/><path d="M3.2 5.6 L5.2 8 L8.2 2.6" fill="none" stroke="#a6a7bf" stroke-width="1.3"/></svg>
<svg class="a" style="left:25.90px;top:390.42px" width="48.4" height="36.6" viewBox="0 0 48 36" preserveAspectRatio="none"><defs><filter id="tb6" x="-5%" y="-5%" width="110%" height="110%"><feGaussianBlur stdDeviation=".8"/></filter><clipPath id="tc6"><rect x=".3" y="1.8" width="47.4" height="33.1"/></clipPath></defs><rect width="48" height="36" fill="#040404"/><g clip-path="url(#tc6)"><g filter="url(#tb6)"><rect width="48" height="36" fill="#050505"/><rect x="0" y="4.7" width="48" height="27" fill="#3a6b2e"/><path d="M24 6 L34 10 L30 16 Z M36 18 L46 14 L47 22 L38 24 Z M30 24 L40 26 L36 31 L28 30 Z" fill="#4a7e3a"/><path d="M28 5 L48 5 L48 12 L36 9 Z" fill="#32602a"/><path d="M0 4.7 L15 4.7 L17 9 L21 10.4 L23 14 L26 16 L25.6 20 L27 24 L24 26 L23 30 L20 31.7 L0 31.7 Z" fill="#e58d17"/><path d="M2 4.7 L6 4.7 L7 9 L3 9.6 Z M8 4.7 L13 4.7 L14 10 L10 11 Z M15.6 7 L18 10 L15 12 Z M20 14 L25 16.4 L21 18 Z M21 21 L26.6 23.4 L22 25 Z" fill="#f2b41e"/><circle cx="5" cy="21.5" r="11.6" fill="#cf7318"/><circle cx="4.4" cy="22" r="7" fill="#7c7a26"/><circle cx="4" cy="22.5" r="3.6" fill="#8f6a1e"/></g></g><rect width="48" height="4.8" fill="#040404"/><rect y="31.7" width="48" height="4.3" fill="#040404"/></svg>
<svg class="j" style="left:79.90px;top:399.67px" width="36.50" height="16.50"><title>長野旅行</title><text x="1.54" y="11.39" font-size="8.25" fill="#000" stroke="#000" stroke-width=".2" textLength="33.4" lengthAdjust="spacingAndGlyphs">長野旅行</text></svg>
<span class="t s" style="left:114.58px;top:405.00px;font-size:8.20px;color:#0a0a0a;transform:scaleX(1.0117);">012</span>
<span class="t s" style="left:128.57px;top:405.00px;font-size:8.20px;color:#0a0a0a;transform:scaleX(0.8435);font-style:italic;">.mpg</span>
<span class="t s" style="left:225.48px;top:405.00px;font-size:8.00px;color:#0a0a0a;transform:scaleX(1.0297);">720</span>
<span class="t s" style="left:241.25px;top:405.00px;font-size:8.00px;color:#0a0a0a;transform:scaleX(1.1777);">×</span>
<span class="t s" style="left:247.81px;top:405.00px;font-size:8.00px;color:#0a0a0a;transform:scaleX(1.0271);">480</span>
<span class="t s" style="left:285.60px;top:405.00px;font-size:8.00px;color:#0a0a0a;transform:scaleX(0.9667);">00:00:30</span>
<div style="left:329.10px;top:401.52px;width:65.60px;height:14.10px;background:#fff;border:1.2px solid #adadad;border-radius:2.8px;box-sizing:border-box"><div style="left:0.9px;top:0.9px;width:6.14px;height:10.1px;background:linear-gradient(#fdf6d8 0%,#fbe596 38%,#f6d061 58%,#f8d974 70%,#fbeaa8 100%);border-radius:1.2px"></div></div>
<span class="t" style="left:354.76px;top:404.00px;font-size:7.60px;color:#000;font-weight:bold;transform:scaleX(0.9221);">10%</span>
<span class="t s" style="left:410.80px;top:405.00px;font-size:8.00px;color:#0a0a0a;transform:scaleX(0.9721);">00:00:19</span>
<svg class="j" style="left:472.20px;top:399.72px" width="28.10" height="16.20"><title>計測中</title><text x="1.49" y="11.18" font-size="8.1" fill="#000" stroke="#000" stroke-width=".2" textLength="25.1" lengthAdjust="spacingAndGlyphs">計測中</text></svg>
<div style="left:3.00px;top:477.49px;width:588.60px;height:1.00px;background:#f2f0e7"></div>
<svg class="a" style="left:6.60px;top:449.09px;opacity:1" width="11.4" height="11" viewBox="0 0 11.4 11"><rect x=".6" y=".6" width="10.2" height="9.8" fill="#fafafc" stroke="#c2c3cc" stroke-width="1.1"/><path d="M3.2 5.6 L5.2 8 L8.2 2.6" fill="none" stroke="#a6a7bf" stroke-width="1.3"/></svg>
<svg class="a" style="left:25.90px;top:436.79px" width="48.4" height="36.6" viewBox="0 0 48 36" preserveAspectRatio="none"><defs><filter id="tb7" x="-5%" y="-5%" width="110%" height="110%"><feGaussianBlur stdDeviation=".8"/></filter><clipPath id="tc7"><rect x=".3" y="1.8" width="47.4" height="33.1"/></clipPath></defs><rect width="48" height="36" fill="#040404"/><g clip-path="url(#tc7)"><g filter="url(#tb7)"><linearGradient id="s7" x1="0" x2="0" y1="0" y2="1"><stop offset="0" stop-color="#2259be"/><stop offset=".35" stop-color="#3777d4"/><stop offset=".6" stop-color="#5b9ce4"/><stop offset=".72" stop-color="#8fc0ee"/><stop offset="1" stop-color="#8fc0ee"/></linearGradient><rect width="48" height="36" fill="url(#s7)"/><path d="M0 17 L3 18 L8 20.4 L13 22.6 L16 24.4 L24 25 L29 25 L32 22.6 L38 18 L43 14.8 L48 14 L48 30 L0 30 Z" fill="#231e1d"/><path d="M33 22.4 L38 18.6 L43 15.4 L48 14.6 L48 24 L40 25 L34 25 Z" fill="#5b3b2b"/><path d="M22 25.4 L34 25 L48 25 L48 30 L22 30 Z" fill="#3a2d29"/><rect x="0" y="29.4" width="48" height="5.4" fill="#6b5c49"/><rect x="0" y="32.6" width="48" height="6" fill="#4e4336"/></g></g></svg>
<svg class="j" style="left:79.90px;top:446.04px" width="36.50" height="16.50"><title>長野旅行</title><text x="1.54" y="11.39" font-size="8.25" fill="#000" stroke="#000" stroke-width=".2" textLength="33.4" lengthAdjust="spacingAndGlyphs">長野旅行</text></svg>
<span class="t s" style="left:114.58px;top:451.00px;font-size:8.20px;color:#0a0a0a;transform:scaleX(1.0076);">013</span>
<span class="t s" style="left:128.57px;top:451.00px;font-size:8.20px;color:#0a0a0a;transform:scaleX(0.8435);font-style:italic;">.mpg</span>
<span class="t s" style="left:225.48px;top:451.00px;font-size:8.00px;color:#0a0a0a;transform:scaleX(1.0297);">720</span>
<span class="t s" style="left:241.25px;top:451.00px;font-size:8.00px;color:#0a0a0a;transform:scaleX(1.1777);">×</span>
<span class="t s" style="left:247.81px;top:451.00px;font-size:8.00px;color:#0a0a0a;transform:scaleX(1.0271);">480</span>
<span class="t s" style="left:285.60px;top:451.00px;font-size:8.00px;color:#0a0a0a;transform:scaleX(0.9675);">00:00:15</span>
<div style="left:329.10px;top:447.89px;width:65.60px;height:14.10px;background:#fff;border:1.2px solid #adadad;border-radius:2.8px;box-sizing:border-box"><div style="left:0.9px;top:0.9px;width:14.74px;height:10.1px;background:linear-gradient(#fdf6d8 0%,#fbe596 38%,#f6d061 58%,#f8d974 70%,#fbeaa8 100%);border-radius:1.2px"></div></div>
<span class="t" style="left:354.96px;top:451.00px;font-size:7.60px;color:#000;font-weight:bold;transform:scaleX(0.9086);">24%</span>
<span class="t s" style="left:410.80px;top:451.00px;font-size:8.00px;color:#0a0a0a;transform:scaleX(0.9721);">00:00:19</span>
<svg class="j" style="left:472.20px;top:446.09px" width="28.10" height="16.20"><title>計測中</title><text x="1.49" y="11.18" font-size="8.1" fill="#000" stroke="#000" stroke-width=".2" textLength="25.1" lengthAdjust="spacingAndGlyphs">計測中</text></svg>
<div style="left:3.00px;top:523.86px;width:588.60px;height:1.00px;background:#f2f0e7"></div>
<svg class="a" style="left:6.60px;top:495.46px;opacity:1" width="11.4" height="11" viewBox="0 0 11.4 11"><rect x=".6" y=".6" width="10.2" height="9.8" fill="#fafafc" stroke="#c2c3cc" stroke-width="1.1"/><path d="M3.2 5.6 L5.2 8 L8.2 2.6" fill="none" stroke="#a6a7bf" stroke-width="1.3"/></svg>
<svg class="a" style="left:25.90px;top:483.16px" width="48.4" height="36.6" viewBox="0 0 48 36" preserveAspectRatio="none"><defs><filter id="tb8" x="-5%" y="-5%" width="110%" height="110%"><feGaussianBlur stdDeviation=".8"/></filter><clipPath id="tc8"><rect x=".3" y="1.8" width="47.4" height="33.1"/></clipPath></defs><rect width="48" height="36" fill="#040404"/><g clip-path="url(#tc8)"><g filter="url(#tb8)"><rect width="48" height="36" fill="#2b4720"/><linearGradient id="s8" x1="0" x2="0" y1="0" y2="1"><stop offset="0" stop-color="#5c9ddc"/><stop offset="1" stop-color="#a4cdf0"/></linearGradient><path d="M5 1.5 L48 1.5 L48 23 L40 23.4 L36 21 L28 16 L20 11.6 L12 6 Z" fill="url(#s8)"/><path d="M20 8 Q24 5 28 7 Q31 5.6 34 8 Q36 10 34 12.6 L24 12 Q20 11 20 8 Z" fill="#f2f6fa"/><path d="M30 15 Q36 10 42 12 Q46 10 48 12 L48 22 L40 22.6 L36 20.6 Z" fill="#f4f7fa"/><path d="M0 3 L5 2 L12 6 L20 11.6 L28 16 L36 21 L40 23.4 L40 35 L0 35 Z" fill="#27421d"/><path d="M2 8 L10 10 L18 16 L24 22 L20 28 L8 30 L2 26 Z" fill="#365726"/><path d="M1 4 L6 4 L10 8 L3 9 Z M20 17 L28 19 L30 24 L24 24 Z" fill="#243b1c"/><path d="M10 26 L20 24 L28 28 L26 33 L12 33 Z" fill="#41662c"/><path d="M33 23.4 L40 22.6 L48 21.6 L48 35 L32 35 L30 27 Z" fill="#24271f"/><path d="M39 22 L47.6 20.6 L47.6 24 L39 24.6 Z" fill="#7d848c"/><path d="M27 23 L35 23 L35 27 L27 27 Z" fill="#5d5444"/></g></g></svg>
<svg class="j" style="left:79.90px;top:492.41px" width="36.50" height="16.50"><title>長野旅行</title><text x="1.54" y="11.39" font-size="8.25" fill="#000" stroke="#000" stroke-width=".2" textLength="33.4" lengthAdjust="spacingAndGlyphs">長野旅行</text></svg>
<span class="t s" style="left:114.58px;top:497.00px;font-size:8.20px;color:#0a0a0a;transform:scaleX(0.9984);">014</span>
<span class="t s" style="left:128.57px;top:497.00px;font-size:8.20px;color:#0a0a0a;transform:scaleX(0.8435);font-style:italic;">.mpg</span>
<span class="t s" style="left:225.48px;top:497.00px;font-size:8.00px;color:#0a0a0a;transform:scaleX(1.0297);">720</span>
<span class="t s" style="left:241.25px;top:497.00px;font-size:8.00px;color:#0a0a0a;transform:scaleX(1.1777);">×</span>
<span class="t s" style="left:247.81px;top:497.00px;font-size:8.00px;color:#0a0a0a;transform:scaleX(1.0271);">480</span>
<span class="t s" style="left:285.60px;top:497.00px;font-size:8.00px;color:#0a0a0a;transform:scaleX(0.9675);">00:00:15</span>
<svg class="j" style="left:346.60px;top:492.46px" width="28.20" height="16.20"><title>待機中</title><text x="1.6" y="11.18" font-size="8.1" fill="#000" stroke="#000" stroke-width=".2" textLength="25" lengthAdjust="spacingAndGlyphs">待機中</text></svg>
<svg class="a" style="left:6.60px;top:541.83px;opacity:1" width="11.4" height="11" viewBox="0 0 11.4 11"><rect x=".6" y=".6" width="10.2" height="9.8" fill="#fafafc" stroke="#c2c3cc" stroke-width="1.1"/><path d="M3.2 5.6 L5.2 8 L8.2 2.6" fill="none" stroke="#a6a7bf" stroke-width="1.3"/></svg>
<svg class="a" style="left:25.90px;top:529.53px" width="48.4" height="36.6" viewBox="0 0 48 36" preserveAspectRatio="none"><defs><filter id="tb9" x="-5%" y="-5%" width="110%" height="110%"><feGaussianBlur stdDeviation=".8"/></filter><clipPath id="tc9"><rect x=".3" y="1.8" width="47.4" height="33.1"/></clipPath></defs><rect width="48" height="36" fill="#040404"/><g clip-path="url(#tc9)"><g filter="url(#tb9)"><rect width="48" height="36" fill="#4f7c2b"/><path d="M0 2 L32 2 L30 6 L22 10 L24 18 L22 26 L18 35 L0 35 Z" fill="#5c8e2f"/><path d="M18 2 L33 2 L36 5 L30 7 L22 8 Z" fill="#6e9c50"/><path d="M1 4 L8 3 L12 7 L6 10 L1 9 Z M10 14 L16 12 L20 17 L13 20 Z M3 22 L9 21 L12 26 L5 28 Z M14 25 L19 24 L19 30 L14 31 Z" fill="#8cb848"/><path d="M0 10 L6 11 L10 16 L4 19 L0 18 Z M12 8 L20 8 L21 12 L14 12 Z M8 28 L14 31 L10 35 L4 35 Z M17 19 L23 19 L22 25 L17 24 Z" fill="#2b4a1c"/><path d="M31 1.5 L48 1.5 L48 8 L40 7.4 L35 6 Z" fill="#eef2f2"/><path d="M21 8.6 L34 7.4 L47 5.8 L47.6 10.4 L22 12.4 Z" fill="#8c8b80"/><path d="M26 7.6 V10 M30 7.2 V9.8 M34 6.8 V9.6 M38 6.4 V9.4 M42 6 V9.2 M46 5.6 V9" stroke="#d9dcd8" stroke-width="1.1"/><path d="M22 12 L47.6 10.2 L47.6 18 L44 24 L30 25 L25 20 Z" fill="#9a9480"/><path d="M23 13 L47 11.4 L47 13.6 L24 15.4 Z" fill="#5d5c52"/><path d="M25 20 L30 25 L44 24 L42 28 L28 28 Z" fill="#4d4a3c"/><path d="M21 27 L34 27.4 L36 33 L20 33 Z" fill="#2d5a38"/><path d="M44 18 L48 16 L48 27 L42 27 Z" fill="#6b7a2e"/><path d="M35 29 Q42 25.4 48 27 L48 35 L34 35 Z" fill="#9ea640"/></g></g></svg>
<svg class="j" style="left:79.90px;top:538.78px" width="36.50" height="16.50"><title>長野旅行</title><text x="1.54" y="11.39" font-size="8.25" fill="#000" stroke="#000" stroke-width=".2" textLength="33.4" lengthAdjust="spacingAndGlyphs">長野旅行</text></svg>
<span class="t s" style="left:114.58px;top:544.00px;font-size:8.20px;color:#0a0a0a;transform:scaleX(1.0064);">015</span>
<span class="t s" style="left:128.57px;top:544.00px;font-size:8.20px;color:#0a0a0a;transform:scaleX(0.8435);font-style:italic;">.mpg</span>
<span class="t s" style="left:225.48px;top:544.00px;font-size:8.00px;color:#0a0a0a;transform:scaleX(1.0297);">720</span>
<span class="t s" style="left:241.25px;top:544.00px;font-size:8.00px;color:#0a0a0a;transform:scaleX(1.1777);">×</span>
<span class="t s" style="left:247.81px;top:544.00px;font-size:8.00px;color:#0a0a0a;transform:scaleX(1.0271);">480</span>
<span class="t s" style="left:285.60px;top:544.00px;font-size:8.00px;color:#0a0a0a;transform:scaleX(0.9675);">00:00:15</span>
<svg class="j" style="left:346.60px;top:538.83px" width="28.20" height="16.20"><title>待機中</title><text x="1.6" y="11.18" font-size="8.1" fill="#000" stroke="#000" stroke-width=".2" textLength="25" lengthAdjust="spacingAndGlyphs">待機中</text></svg>
<div style="left:591.60px;top:88.00px;width:12.40px;height:472.00px;background:#fbfaf7"></div>
<div style="left:592.60px;top:89.80px;width:10.20px;height:10.40px;background:linear-gradient(90deg,#cbd9fb,#b9cbf6 70%,#d6e1fa);border-radius:1.5px;box-shadow:inset 0 0 0 .6px #e4ecfd"><svg class="a" style="left:2.2px;top:2.8px" width="6.4" height="5" viewBox="0 0 6.4 5"><path d="M.6 4.2 L3.2 1.4 L5.8 4.2" fill="none" stroke="#34478c" stroke-width="1.5"/></svg></div>
<div style="left:592.60px;top:101.30px;width:10.20px;height:309.70px;background:linear-gradient(90deg,#ccdafc,#b7c9f5 70%,#d9e3fb);border-radius:1.5px;box-shadow:inset 0 0 0 .6px #e0e9fd"></div>
<div style="left:592.60px;top:548.30px;width:10.20px;height:10.50px;background:linear-gradient(90deg,#cbd9fb,#b9cbf6 70%,#d6e1fa);border-radius:1.5px;box-shadow:inset 0 0 0 .6px #e4ecfd"><svg class="a" style="left:2.2px;top:3px" width="6.4" height="5" viewBox="0 0 6.4 5"><path d="M.6 .8 L3.2 3.6 L5.8 .8" fill="none" stroke="#34478c" stroke-width="1.5"/></svg></div>
<div style="left:604.00px;top:88.90px;width:193.00px;height:471.10px;background:#4f4f4f"></div>
<div style="left:607.00px;top:104.60px;width:190.00px;height:274.20px;background:#ececec;box-shadow:inset 1px -1px 0 #f8f8f8"></div>
<div style="left:790.80px;top:104.60px;width:6.20px;height:274.20px;background:#f2f2ee"></div>
<div style="left:610.20px;top:91.40px;width:22.40px;height:14.00px;background:#ececec;border-radius:3px 3px 0 0"></div>
<svg class="j" style="left:611.20px;top:88.30px" width="19.50" height="17.20"><title>設定</title><text x="1.56" y="11.87" font-size="8.6" fill="#000" stroke="#000" stroke-width=".28" textLength="16.4" lengthAdjust="spacingAndGlyphs">設定</text></svg>
<svg class="j" style="left:637.50px;top:88.30px" width="36.50" height="17.20"><title>詳細設定</title><text x="1.55" y="11.87" font-size="8.6" fill="#e4e4e4" stroke="#e4e4e4" stroke-width=".2" textLength="33.4" lengthAdjust="spacingAndGlyphs">詳細設定</text></svg>
<svg class="j" style="left:619.10px;top:108.90px" width="58.30" height="16.20"><title>現在のドライブ:</title><text x="1.66" y="11.18" font-size="8.1" fill="#000" stroke="#000" stroke-width=".2" textLength="55" lengthAdjust="spacingAndGlyphs">現在のドライブ:</text></svg>
<div style="left:620.20px;top:129.30px;width:165.40px;height:11.90px;background:#efede0;border:1px solid #cfccbb;box-sizing:border-box;box-shadow:inset 0.6px 0.6px 0 #c2bfae"></div><span class="t" style="left:621.75px;top:132.00px;font-size:8.20px;color:#b3b0a2;transform:scaleX(0.9691);">HL-DT-ST DVDRAM GH22NS40 (Z:)</span><svg class="a" style="left:777.6px;top:134.25px" width="4.2" height="2.6" viewBox="0 0 4.2 2.6"><path d="M0 0 H4.2 L2.1 2.6 Z" fill="#7a766a"/></svg>
<svg class="j" style="left:619.20px;top:150.70px" width="91.60" height="16.20"><title>ターゲットディスクサイズ:</title><text x="1.49" y="11.18" font-size="8.1" fill="#000" stroke="#000" stroke-width=".2" textLength="88.6" lengthAdjust="spacingAndGlyphs">ターゲットディスクサイズ:</text></svg>
<div style="left:620.20px;top:170.30px;width:165.40px;height:12.10px;background:#efede0;border:1px solid #cfccbb;box-sizing:border-box;box-shadow:inset 0.6px 0.6px 0 #c2bfae"></div><span class="t" style="left:621.74px;top:173.00px;font-size:8.20px;color:#b3b0a2;transform:scaleX(0.9828);">DVD-5 (4.7G)</span><svg class="a" style="left:777.6px;top:175.35px" width="4.2" height="2.6" viewBox="0 0 4.2 2.6"><path d="M0 0 H4.2 L2.1 2.6 Z" fill="#7a766a"/></svg>
<svg class="j" style="left:619.60px;top:191.10px" width="64.40" height="16.20"><title>ディスクレーベル:</title><text x="1.6" y="11.18" font-size="8.1" fill="#000" stroke="#000" stroke-width=".2" textLength="61.2" lengthAdjust="spacingAndGlyphs">ディスクレーベル:</text></svg>
<div style="left:620.20px;top:212.00px;width:165.40px;height:10.60px;background:#efede0;border:1px solid #cfccbb;box-sizing:border-box;box-shadow:inset 0.6px 0.6px 0 #c2bfae"></div><span class="t" style="left:621.97px;top:213.00px;font-size:8.20px;color:#b3b0a2;transform:scaleX(1.0506);">2009-09-17</span>
<svg class="j" style="left:619.20px;top:234.00px" width="52.80" height="16.20"><title>ビデオサイズ:</title><text x="0.97" y="11.18" font-size="8.1" fill="#000" stroke="#000" stroke-width=".2" textLength="50.9" lengthAdjust="spacingAndGlyphs">ビデオサイズ:</text></svg>
<div style="left:620.20px;top:254.30px;width:165.40px;height:12.20px;background:#efede0;border:1px solid #cfccbb;box-sizing:border-box;box-shadow:inset 0.6px 0.6px 0 #c2bfae"></div><span class="t" style="left:621.77px;top:257.00px;font-size:8.20px;color:#b3b0a2;transform:scaleX(1.0092);">1280x720</span><svg class="a" style="left:777.6px;top:259.40px" width="4.2" height="2.6" viewBox="0 0 4.2 2.6"><path d="M0 0 H4.2 L2.1 2.6 Z" fill="#7a766a"/></svg>
<svg class="j" style="left:619.30px;top:275.40px" width="56.30" height="16.20"><title>フレームレート:</title><text x="1.37" y="11.18" font-size="8.1" fill="#000" stroke="#000" stroke-width=".2" textLength="53.6" lengthAdjust="spacingAndGlyphs">フレームレート:</text></svg>
<div style="left:620.20px;top:295.20px;width:165.40px;height:12.60px;background:#efede0;border:1px solid #cfccbb;box-sizing:border-box;box-shadow:inset 0.6px 0.6px 0 #c2bfae"></div><span class="t" style="left:622.00px;top:298.00px;font-size:8.20px;color:#b3b0a2;transform:scaleX(0.9625);">29.97 (NTSC)</span><svg class="a" style="left:777.6px;top:300.50px" width="4.2" height="2.6" viewBox="0 0 4.2 2.6"><path d="M0 0 H4.2 L2.1 2.6 Z" fill="#7a766a"/></svg>
<div style="left:607.00px;top:380.80px;width:190.00px;height:140.00px;background:#000"></div>
<svg class="a" style="left:652.4px;top:392.8px" width="100" height="100" viewBox="-50 -50 100 100">
<defs><radialGradient id="rg"><stop offset="0" stop-color="#666"/><stop offset=".78" stop-color="#6a6a6a"/><stop offset=".85" stop-color="#767676"/><stop offset=".9" stop-color="#3c3c3c"/><stop offset="1" stop-color="#000" stop-opacity="0"/></radialGradient>
<radialGradient id="hg"><stop offset="0" stop-color="#1e1e1e"/><stop offset=".75" stop-color="#222"/><stop offset="1" stop-color="#3c3c3c"/></radialGradient>
<filter id="bl" x="-20%" y="-20%" width="140%" height="140%"><feGaussianBlur stdDeviation=".7"/></filter></defs>
<g filter="url(#bl)"><circle r="40" fill="url(#rg)"/><circle cx="21.40" cy="0.00" r="9.4" fill="url(#hg)"/><circle cx="4.85" cy="2.80" r="1.7" fill="#2c2c2c"/><circle cx="10.70" cy="18.53" r="9.4" fill="url(#hg)"/><circle cx="0.00" cy="5.60" r="1.7" fill="#2c2c2c"/><circle cx="-10.70" cy="18.53" r="9.4" fill="url(#hg)"/><circle cx="-4.85" cy="2.80" r="1.7" fill="#2c2c2c"/><circle cx="-21.40" cy="0.00" r="9.4" fill="url(#hg)"/><circle cx="-4.85" cy="-2.80" r="1.7" fill="#2c2c2c"/><circle cx="-10.70" cy="-18.53" r="9.4" fill="url(#hg)"/><circle cx="-0.00" cy="-5.60" r="1.7" fill="#2c2c2c"/><circle cx="10.70" cy="-18.53" r="9.4" fill="url(#hg)"/><circle cx="4.85" cy="-2.80" r="1.7" fill="#2c2c2c"/><circle r="1.9" fill="#2c2c2c"/></g></svg>
<span class="t" style="left:646.89px;top:481.00px;font-size:13.00px;color:#f4f4f4;font-weight:bold;transform:scaleX(1.2692);text-shadow:0 0 2px #444;">Video Preview</span>
<div style="left:607.00px;top:520.80px;width:190.00px;height:39.20px;background:#ececec"></div>
<div style="left:611.00px;top:529.00px;width:180.00px;height:1.50px;background:#969696"></div>
<svg class="a" style="left:608.8px;top:525.2px" width="7" height="11" viewBox="0 0 7 11"><path d="M.5 .5 H6.5 V6.6 L3.5 10.3 L.5 6.6 Z" fill="#f6f6f6" stroke="#555" stroke-width=".8"/><path d="M3.5 3 V6" stroke="#888" stroke-width=".9"/></svg>
<svg class="a" style="left:613.8px;top:544px" width="40" height="7" viewBox="0 0 40 7"><g fill="#b4b4b4"><path d="M.4 .6 L4.8 3.4 L.4 6.2 Z"/><rect x="16.2" y=".6" width="2" height="5.6"/><rect x="20.2" y=".6" width="2" height="5.6"/><rect x="33" y=".8" width="5.4" height="5.2"/></g></svg>
<svg class="a" style="left:735px;top:542.4px" width="12" height="10" viewBox="0 0 12 10"><path d="M.4 3.2 H2.4 L5.2 .4 V9 L2.4 6.2 H.4 Z" fill="#8a8a8a"/><path d="M7 3 Q8.3 4.7 7 6.4 M8.8 2 Q10.8 4.7 8.8 7.4" fill="none" stroke="#a4a4a4" stroke-width=".9"/></svg>
<div style="left:753.80px;top:546.20px;width:39.00px;height:1.50px;background:#969696"></div>
<svg class="a" style="left:788px;top:542.6px" width="7" height="11" viewBox="0 0 7 11"><path d="M.5 .5 H6.5 V6.6 L3.5 10.3 L.5 6.6 Z" fill="#f6f6f6" stroke="#555" stroke-width=".8"/><path d="M3.5 3 V6" stroke="#888" stroke-width=".9"/></svg>
<div style="left:3.00px;top:560.00px;width:794.00px;height:17.00px;background:linear-gradient(#4c4c52 0%,#45454a 22%,#3c3c3e 45%,#343434 60%,#2f2f2f 100%)"></div>
<svg class="j" style="left:3.80px;top:560.70px" width="36.20" height="15.40"><title>準備完了</title><text x="1.58" y="10.63" font-size="7.7" fill="#fff" stroke="#fff" stroke-width=".16" textLength="33" lengthAdjust="spacingAndGlyphs">準備完了</text></svg>
<div style="left:372.50px;top:561.00px;width:1.00px;height:15.60px;background:#2a2a2a;box-shadow:1px 0 0 #5c5c5c"></div>
<div style="left:506.40px;top:561.00px;width:1.00px;height:15.60px;background:#2a2a2a;box-shadow:1px 0 0 #5c5c5c"></div>
<div style="left:639.80px;top:561.00px;width:1.00px;height:15.60px;background:#2a2a2a;box-shadow:1px 0 0 #5c5c5c"></div>
<div style="left:773.90px;top:561.00px;width:1.00px;height:15.60px;background:#2a2a2a;box-shadow:1px 0 0 #5c5c5c"></div>
<svg class="a" style="left:376.6px;top:563.6px" width="11" height="11" viewBox="-5.5 -5.5 11 11"><circle r="5" fill="#dfe9f3"/><circle r="4.2" fill="#5f86b4"/><g fill="#e8f0f8"><circle cx="0" cy="-2.3" r="1.1"/><circle cx="0" cy="2.3" r="1.1"/><circle cx="-2.3" cy="0" r="1.1"/><circle cx="2.3" cy="0" r="1.1"/><circle r=".6"/></g></svg>
<svg class="j" style="left:389.50px;top:560.70px" width="39.70" height="15.40"><title>合計時間:</title><text x="1.61" y="10.63" font-size="7.7" fill="#fff" stroke="#fff" stroke-width=".16" textLength="36.5" lengthAdjust="spacingAndGlyphs">合計時間:</text></svg>
<span class="t" style="left:430.11px;top:565.00px;font-size:7.90px;color:#fff;transform:scaleX(0.9491);">00:04:00</span>
<svg class="a" style="left:509.8px;top:563.6px" width="11" height="11" viewBox="-5.5 -5.5 11 11"><circle r="5" fill="#e9e9f1"/><path d="M0 0 L4.6 -2 A5 5 0 0 1 3 4 Z" fill="#b8b6d6"/><path d="M0 0 L-4.6 2 A5 5 0 0 1 -3 -4 Z" fill="#fff"/><circle r="1.5" fill="#6a6a8a"/><circle r=".7" fill="#fff"/></svg>
<svg class="j" style="left:523.70px;top:560.70px" width="45.70" height="15.40"><title>予測サイズ:</title><text x="1.3" y="10.63" font-size="7.7" fill="#fff" stroke="#fff" stroke-width=".16" textLength="43.1" lengthAdjust="spacingAndGlyphs">予測サイズ:</text></svg>
<span class="t" style="left:570.02px;top:565.00px;font-size:7.90px;color:#fff;transform:scaleX(0.9626);">169.50 MB</span>
<svg class="a" style="left:644.2px;top:563.6px" width="11" height="11" viewBox="-5.5 -5.5 11 11"><circle r="5" fill="#f4f4f4" stroke="#c8c8c8" stroke-width=".6"/><path d="M0 -3.4 V0 L-2 2.4 M0 0 L2.2 2.2" fill="none" stroke="#d06a50" stroke-width=".9"/></svg>
<svg class="j" style="left:656.30px;top:560.70px" width="37.30" height="15.40"><title>残り時間:</title><text x="1.56" y="10.63" font-size="7.7" fill="#fff" stroke="#fff" stroke-width=".16" textLength="34.2" lengthAdjust="spacingAndGlyphs">残り時間:</text></svg>
<span class="t" style="left:693.90px;top:565.00px;font-size:7.90px;color:#fff;transform:scaleX(0.9566);">00:02:44</span>
<svg class="a" style="left:776px;top:566.6px" width="12" height="9" viewBox="0 0 12 9"><path d="M.2 .8 H2.4 L3 1.6 H5.6 V5.6 H.2 Z" fill="#e8e04a"/><path d="M4.8 3.2 H7.2 L7.8 4 H11.4 V8.6 H4.8 Z" fill="#f4ec2e"/></svg>
<svg class="a" style="left:789.4px;top:568.6px" width="8" height="8" viewBox="0 0 8 8"><g fill="#9a9a9a"><rect x="5.6" y=".6" width="1.4" height="1.4"/><rect x="3.1" y="3.1" width="1.4" height="1.4"/><rect x="5.6" y="3.1" width="1.4" height="1.4"/><rect x=".6" y="5.6" width="1.4" height="1.4"/><rect x="3.1" y="5.6" width="1.4" height="1.4"/><rect x="5.6" y="5.6" width="1.4" height="1.4"/></g></svg>
<div style="left:0.00px;top:23.00px;width:3.00px;height:557.00px;background:linear-gradient(90deg,#0831d9,#0a4fe8 50%,#0a3ad8)"></div>
<div style="left:797.00px;top:23.00px;width:3.00px;height:557.00px;background:linear-gradient(90deg,#0a3ad8,#0a4fe8 50%,#0831d9)"></div>
<div style="left:0.00px;top:576.80px;width:800.00px;height:3.20px;background:linear-gradient(#0a4fe8,#0a3fdc 50%,#0831c8)"></div>
</div></body></html>
